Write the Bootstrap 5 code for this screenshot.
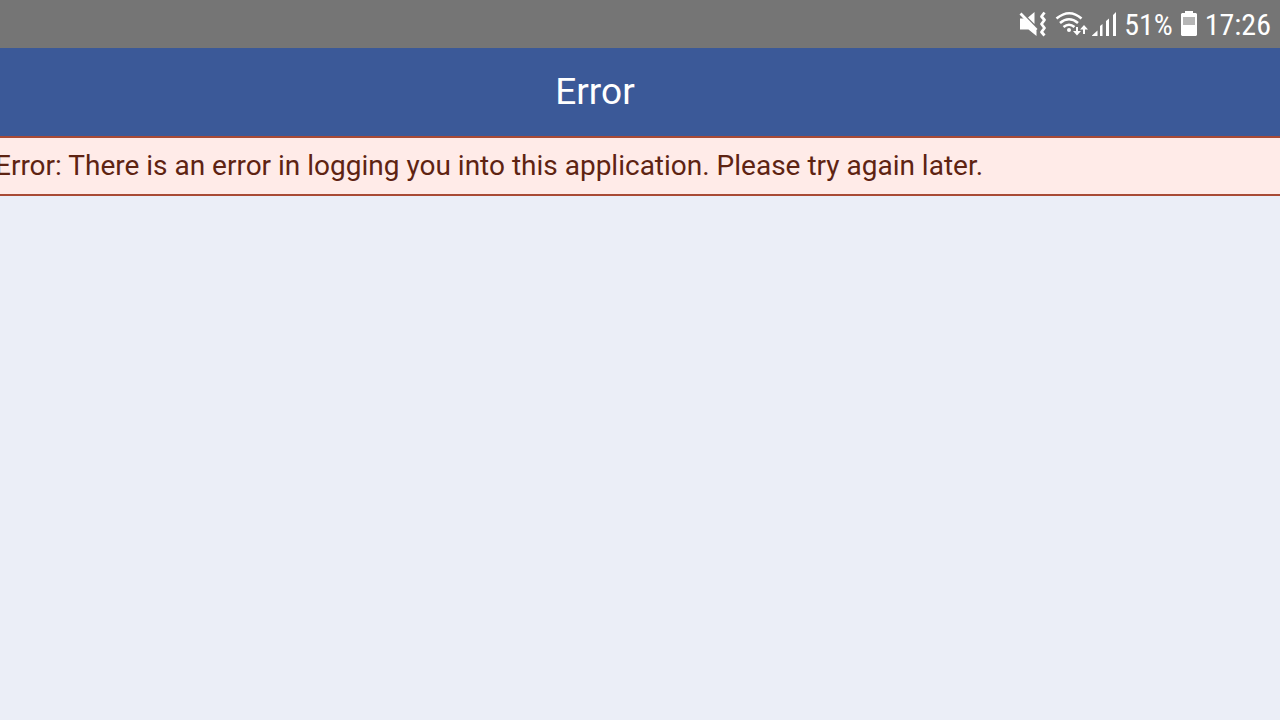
<!DOCTYPE html>
<html lang="en">
<head>
<meta charset="utf-8">
<meta name="viewport" content="width=device-width, initial-scale=1">
<title>Error</title>
<link href="https://cdn.jsdelivr.net/npm/bootstrap@5.3.0/dist/css/bootstrap.min.css" rel="stylesheet">
<style>
  body { background: #ebeef7; font-family: Roboto, "Liberation Sans", sans-serif; }
  .status-bar { height: 48px; background: #757575; color: #fff; font-size: 30px; line-height: 48px; padding-right: 9px; }
  .status-text { padding-top: 2px; font-family: "Roboto Condensed", Roboto, "Liberation Sans", sans-serif; }
  .title-bar { height: 88px; background: #3b5998; color: #fff; padding-right: 90px; }
  .title-bar h1 { font-size: 37px; line-height: 44px; font-weight: 400; }
  .error-strip { background: #ffebe8; color: #5e2312; border: solid #a84a35; border-width: 2px 0; font-size: 28px; line-height: 36px; padding: 10px 0; }
  .error-strip p { margin-left: -5px; }
</style>
</head>
<body class="min-vh-100 overflow-x-hidden">
<div class="status-bar d-flex justify-content-end align-items-center">
  <svg width="106" height="48" viewBox="1012 0 106 48" fill="#fff" aria-hidden="true">
    <!-- muted, vibrating -->
    <path d="M1018 18.500h4l12.500 12v5.500l-8-6.500h-8.500zM1026 17.500l6.500-5.500v12z"/>
    <path d="M1018.500 13.500l16 16.500" stroke="#fff" stroke-width="2.800"/>
    <path d="M1042.500 12.500l-3 4 3 3.500-3 4 3 4-3 4 3 3.500" fill="none" stroke="#fff" stroke-width="2.800" stroke-linejoin="round"/>
    <!-- wifi with traffic arrows -->
    <g fill="none" stroke="#fff" stroke-width="2.600">
      <path d="M1054.500 18.500q13-10.500 25 0M1058 23q9-7.500 18 0M1061.500 27q5.500-4.500 11 0"/>
      <path d="M1075 27v7M1082 34v-7" stroke-width="2"/>
    </g>
    <circle cx="1067" cy="30" r="2"/>
    <path d="M1071 31h8l-4 4.500zM1078 29.500h8l-4-4.500z"/>
    <!-- signal -->
    <path d="M1090 35.500l5.500-5v5.500h-5.500zM1098 26l2.500-2v12h-2.500zM1104 21l3-2.500v17.500h-3zM1111 15l3-3v24h-3z"/>
  </svg>
  <span class="status-text ms-1">51%</span>
  <svg class="ms-2" width="16" height="48" viewBox="0 0 16 48" aria-hidden="true">
    <path fill="#fff" d="M4 11h8v2h3l1 1v21l-1 1H1l-1-1V14l1-1h3z"/>
    <path fill="#b5b5b5" d="M2 17h12v8H2z"/>
  </svg>
  <span class="status-text ms-2">17:26</span>
</div>
<header class="title-bar d-flex justify-content-center align-items-center">
  <h1 class="m-0">Error</h1>
</header>
<main>
  <div class="error-strip" role="alert">
    <p class="mb-0">Error: There is an error in logging you into this application. Please try again later.</p>
  </div>
</main>
<script src="https://cdn.jsdelivr.net/npm/bootstrap@5.3.0/dist/js/bootstrap.bundle.min.js"></script>
</body>
</html>
